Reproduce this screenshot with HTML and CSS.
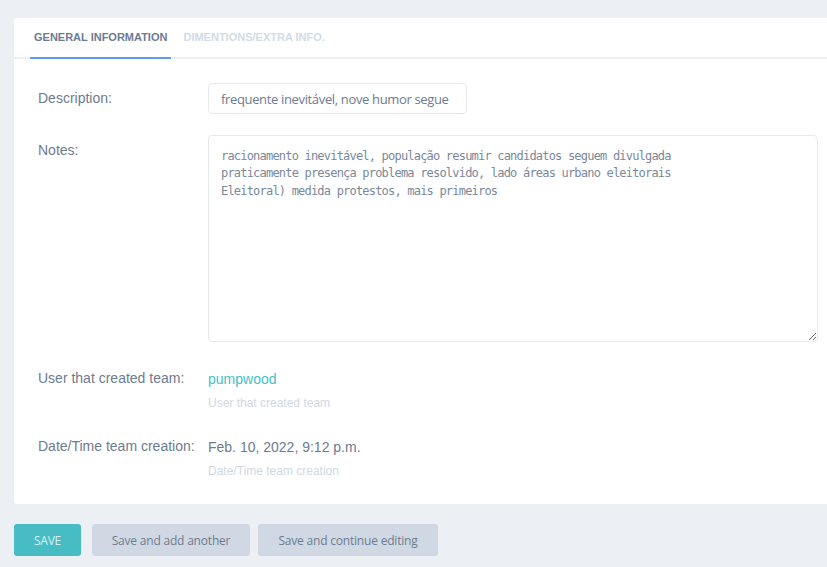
FILE: index.html
```html
<!DOCTYPE html>
<html>
<head>
<meta charset="utf-8">
<link rel="stylesheet" href="styles.css">
</head>
<body>
<div class="page">
  <div class="card">
    <div class="tabs">
      <div class="tab active">General Information</div>
      <div class="tab">Dimentions/Extra Info.</div>
    </div>
    <div class="form">
      <div class="row">
        <label class="label">Description:</label>
        <div class="field"><input class="input" type="text" value="frequente inevitável, nove humor segue"></div>
      </div>
      <div class="row">
        <label class="label">Notes:</label>
        <div class="field"><textarea class="textarea">racionamento inevitável, população resumir candidatos seguem divulgada
praticamente presença problema resolvido, lado áreas urbano eleitorais
Eleitoral) medida protestos, mais primeiros</textarea></div>
      </div>
      <div class="row info">
        <label class="label">User that created team:</label>
        <div class="field">
          <div class="value link">pumpwood</div>
          <div class="help">User that created team</div>
        </div>
      </div>
      <div class="row info last">
        <label class="label">Date/Time team creation:</label>
        <div class="field">
          <div class="value">Feb. 10, 2022, 9:12 p.m.</div>
          <div class="help">Date/Time team creation</div>
        </div>
      </div>
    </div>
  </div>
  <div class="actions">
    <button class="btn primary">SAVE</button>
    <button class="btn secondary add">Save and add another</button>
    <button class="btn secondary cont">Save and continue editing</button>
  </div>
</div>
</body>
</html>
```

FILE: styles.css
```css
html, body {
  margin: 0;
  padding: 0;
  background: #ecf0f5;
  font-family: "Liberation Sans", Arial, sans-serif;
  overflow: hidden;
}

.page {
  padding: 18px 0 0 14px;
}

.card {
  background: #ffffff;
  border-radius: 4px 0 0 4px;
}

.tabs {
  display: flex;
  gap: 8px;
  padding-left: 16px;
  border-bottom: 2px solid #ecf0f5;
}

.tab {
  height: 39px;
  line-height: 39px;
  padding: 0 4px;
  font-size: 11px;
  font-weight: bold;
  text-transform: uppercase;
  color: #d2dbe6;
  margin-bottom: -2px;
  border-bottom: 2px solid transparent;
}

.tab.active {
  color: #6d7b91;
  border-bottom-color: #5e9cf0;
}

.form {
  padding: 24px 9px 25px 24px;
}

.row {
  display: flex;
  align-items: flex-start;
  margin-bottom: 21px;
}

.row.info {
  margin-bottom: 20px;
}

.row.last {
  margin-bottom: 0;
}

.label {
  width: 170px;
  flex: none;
  font-size: 14px;
  line-height: 31px;
  color: #6d7b91;
}

.field {
  flex: 1;
}

.input {
  box-sizing: border-box;
  width: 259px;
  height: 31px;
  border: 1px solid #e5e9ee;
  border-radius: 4px;
  padding: 0 12px;
  font-family: "Open Sans", sans-serif;
  font-size: 13px;
  letter-spacing: -0.35px;
  color: #6d7b91;
  outline: none;
}

.textarea {
  display: block;
  box-sizing: border-box;
  width: 610px;
  height: 207px;
  border: 1px solid #e5e9ee;
  border-radius: 4px;
  padding: 12px 12px;
  font-family: "DejaVu Sans Mono", monospace;
  font-size: 12px;
  letter-spacing: -0.8px;
  line-height: 17.33px;
  color: #7a889b;
  outline: none;
}

.value {
  font-size: 14px;
  line-height: 31px;
  padding-top: 1px;
  color: #6d7b91;
}

.value.link {
  color: #45bfc7;
}

.help {
  font-size: 12px;
  line-height: 16px;
  color: #d0d8e2;
}

.actions {
  display: flex;
  margin-top: 20px;
}

.btn {
  height: 32px;
  border: none;
  border-radius: 3px;
  font-family: "Open Sans", sans-serif;
  font-size: 12px;
  letter-spacing: -0.2px;
  padding: 0;
  margin-right: 8px;
}

.btn.primary {
  background: #47bcc2;
  color: #d6f1f3;
  width: 67px;
  margin-right: 11px;
}

.btn.secondary {
  background: #d0d9e3;
  color: #6d7b91;
}

.btn.add {
  width: 158px;
}

.btn.cont {
  width: 180px;
}
```
